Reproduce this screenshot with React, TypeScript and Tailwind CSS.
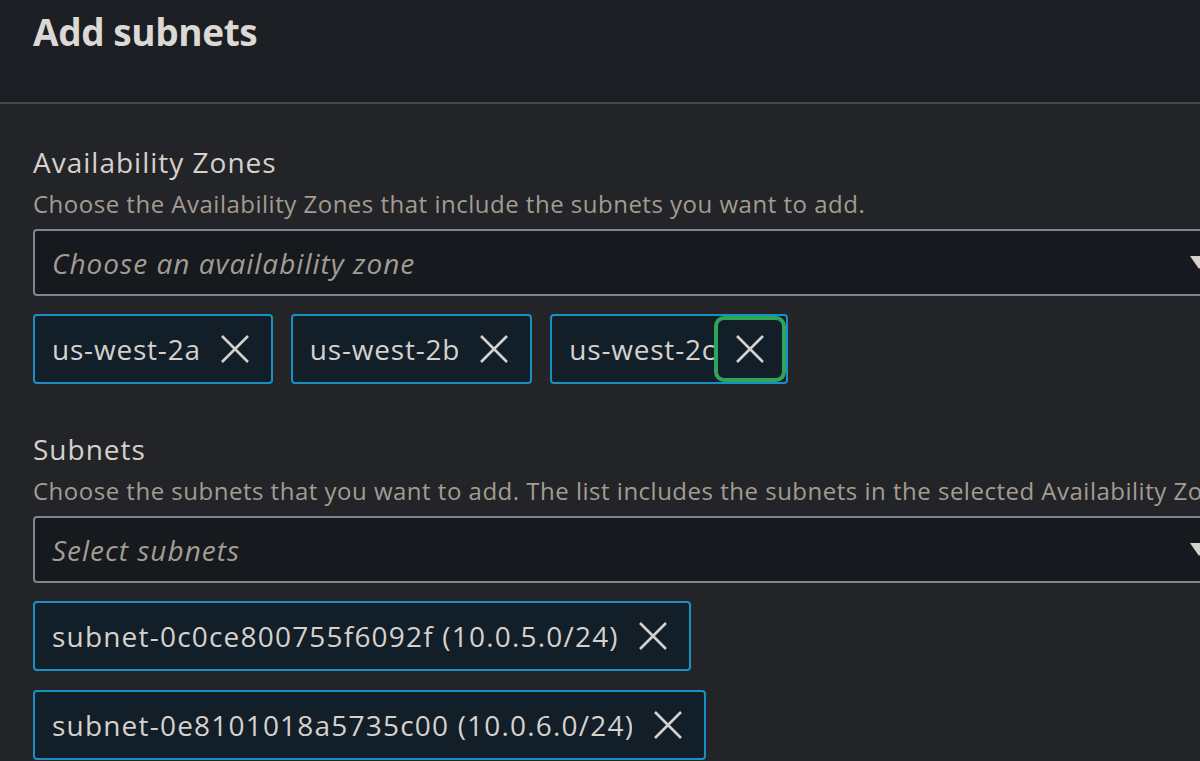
const ZONES = ["us-west-2a", "us-west-2b", "us-west-2c"];
const SUBNETS = ["subnet-0c0ce800755f6092f (10.0.5.0/24)", "subnet-0e8101018a5735c00 (10.0.6.0/24)"];

function Caret() {
  return (
    <svg width="18" height="13" viewBox="0 0 18 13" className="shrink-0">
      <path d="M0 0 L18 0 L9 13 Z" fill="#d5d1cc" />
    </svg>
  );
}

function Cross() {
  return (
    <svg width="30" height="30" viewBox="0 0 30 30">
      <path d="M2 2 L28 28 M28 2 L2 28" stroke="#d5d1cc" strokeWidth="2.6" fill="none" />
    </svg>
  );
}

function Token({ label, focused, wide }: { label: string; focused?: boolean; wide?: boolean }) {
  return (
    <div className="flex h-[70px] items-center rounded-[4px] border-2 border-[#1a8fc4] bg-[#121e28] pl-[17px]">
      <span className={"whitespace-nowrap text-[28px] text-[#d5d1cc] " + (wide ? "tracking-[1.2px]" : "tracking-[0.8px]")}>
        {label}
      </span>
      <span
        className={
          "-ml-[2px] flex h-[66px] w-[72px] shrink-0 items-center justify-center rounded-[10px] bg-[#121e28] " +
          (focused ? "border-4 border-[#2ea55b]" : "border-4 border-transparent")
        }
      >
        <Cross />
      </span>
    </div>
  );
}

function Select({ placeholder }: { placeholder: string }) {
  return (
    <div className="-mr-[63px] flex h-[67px] items-center justify-between rounded-[4px] border-2 border-[#7b8891] bg-[#16191e] pl-[17px] pr-[20px]">
      <span className="text-[28px] italic tracking-[1px] text-[#a39c92]">{placeholder}</span>
      <Caret />
    </div>
  );
}

export default function App() {
  return (
    <div className="h-[761px] w-[1200px] overflow-hidden bg-[#232427] font-['Open_Sans',sans-serif]">
      <header className="h-[104px] border-b-2 border-[#424850] bg-[#1b1e23] px-[33px] pt-[10px]">
        <h1 className="text-[37px] font-bold leading-[44px] tracking-[-0.4px] text-[#dcd8d3]">Add subnets</h1>
      </header>

      <section className="px-[33px] pt-[40px]">
        <div className="text-[28px] leading-[36px] tracking-[1px] text-[#d5d1cc]">Availability Zones</div>
        <p className="mt-[10px] whitespace-nowrap text-[24px] leading-[28px] tracking-[0.5px] text-[#a39c92]">
          Choose the Availability Zones that include the subnets you want to add.
        </p>
        <div className="mt-[11px]">
          <Select placeholder="Choose an availability zone" />
        </div>
        <div className="mt-[18px] flex gap-[18px]">
          {ZONES.map((z, i) => (
            <Token key={z} label={z} focused={i === 2} />
          ))}
        </div>

        <div className="mt-[47px] text-[28px] leading-[36px] tracking-[1px] text-[#d5d1cc]">Subnets</div>
        <p className="mt-[10px] whitespace-nowrap text-[24px] leading-[28px] tracking-[0.5px] text-[#a39c92]">
          Choose the subnets that you want to add. The list includes the subnets in the selected Availability Zones.
        </p>
        <div className="mt-[11px]">
          <Select placeholder="Select subnets" />
        </div>
        <div className="mt-[18px] flex flex-col items-start gap-[19px]">
          {SUBNETS.map((s) => (
            <Token key={s} label={s} wide />
          ))}
        </div>
      </section>
    </div>
  );
}
